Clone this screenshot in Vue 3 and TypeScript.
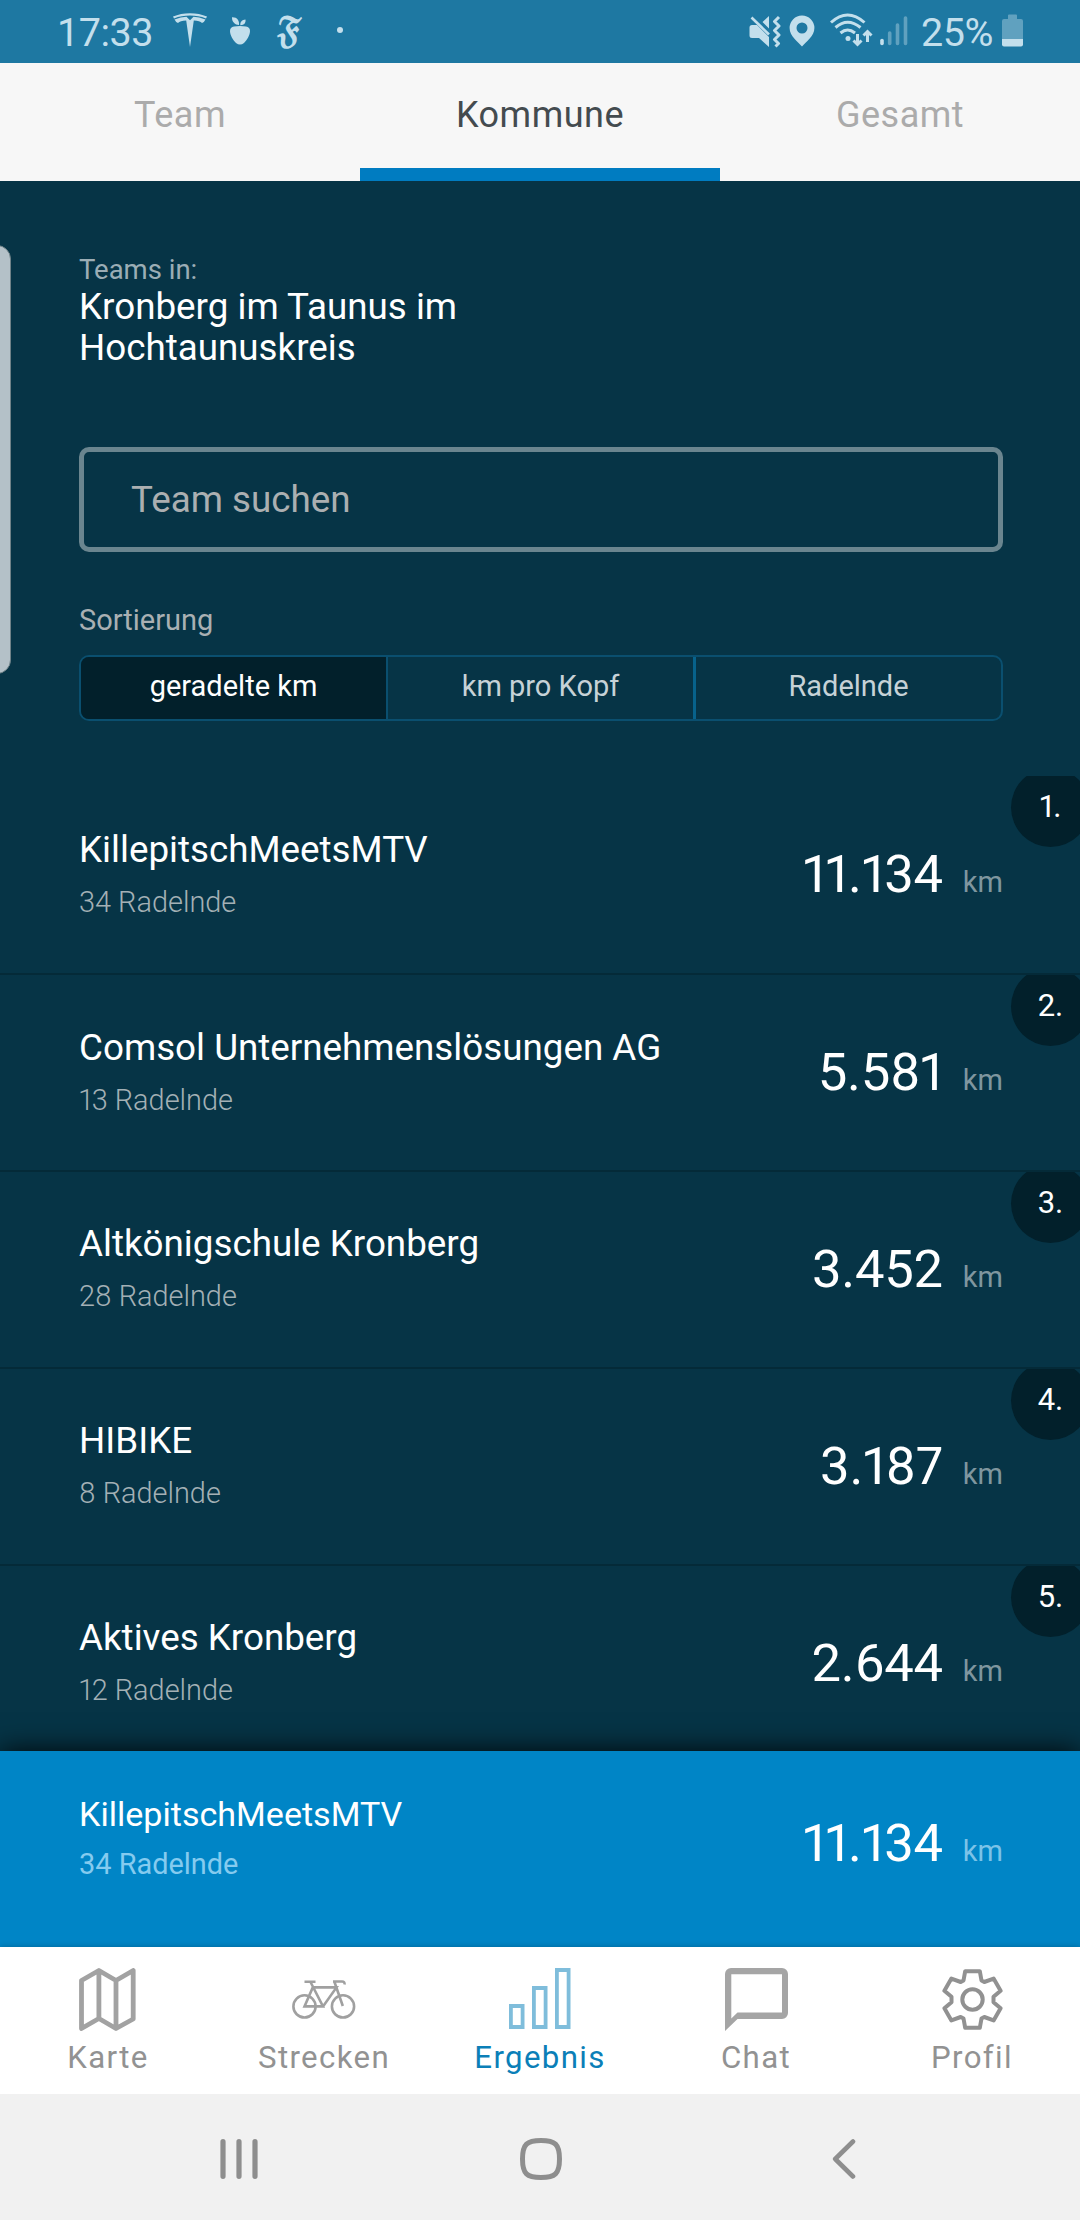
<script setup lang="ts">
import { ref } from 'vue'

interface Team {
  name: string
  riders: number
  km: string
}

const tabs: string[] = ['Team', 'Kommune', 'Gesamt']
const activeTab = ref<string>('Kommune')

const sortModes: string[] = ['geradelte km', 'km pro Kopf', 'Radelnde']
const sortMode = ref<string>('geradelte km')

const query = ref<string>('')

const teams: Team[] = [
  { name: 'KillepitschMeetsMTV', riders: 34, km: '11.134' },
  { name: 'Comsol Unternehmenslösungen AG', riders: 13, km: '5.581' },
  { name: 'Altkönigschule Kronberg', riders: 28, km: '3.452' },
  { name: 'HIBIKE', riders: 8, km: '3.187' },
  { name: 'Aktives Kronberg', riders: 12, km: '2.644' },
]
const ownTeam: Team = teams[0]
</script>

<template>
  <div class="screen">
    <header class="status">
      <span class="clock">17:33</span>
      <svg class="ic-tesla" width="34" height="34" viewBox="0 0 34 34" fill="currentColor">
        <path d="M0 3.6C10-1 24-1 34 3.6L33 5.400C23 1.600 11 1.600 1 5.400Z" />
        <path d="M1.500 6.600Q8 4 13.500 3.800L17 7.200L20.500 3.800Q26 4 32.500 6.600Q31.500 9 29 10Q27 7.600 20.800 7.400L17 34L13.200 7.400Q7 7.600 5 10Q2.500 9 1.500 6.600Z" />
      </svg>
      <svg class="ic-fruit" width="22" height="28" viewBox="0 0 22 28" fill="currentColor">
        <path d="M5 9.500Q1 10 1 14C1 18 4 23 7 26Q11 29 15 26C18 23 21 18 21 14Q21 10 17 9.500Q11 8.500 5 9.500Z" />
        <path d="M3 0.300C8 0 10.500 3.500 10 8C6 8 2.800 5 3 0.300Z" />
        <path d="M16.500 2.500C17 6 15 8.300 11.300 8.200C11 5 13 2.600 16.500 2.500Z" />
      </svg>
      <span class="ic-fraktur">𝔉</span>
      <span class="more-dot"></span>
      <span class="spacer"></span>
      <svg class="ic-mute" width="32" height="34" viewBox="0 0 32 34">
        <path fill="currentColor" d="M3 10H8L20 22V32L10 23H3Q0.500 23 0.500 20.500V12.500Q0.500 10 3 10ZM13.500 7L20 1V13.500Z" />
        <path d="M2.500 2.500L20 19.500" fill="none" stroke="currentColor" stroke-width="2.600" />
        <path d="M30 2L25.500 6.500L30 11L25.500 15.500L30 20L25.500 24.500L29.500 28.500L26.500 31.500" fill="none" stroke="currentColor" stroke-width="3" stroke-linejoin="round" />
      </svg>
      <svg class="ic-pin" width="26" height="32" viewBox="0 0 26 32" fill="currentColor">
        <path fill-rule="evenodd" d="M13 0.500A12.400 12.400 0 0 1 25.400 13C25.400 21 17 27 13 31.500C9 27 0.600 21 0.600 13A12.400 12.400 0 0 1 13 0.500ZM13 7.500A5.500 5.500 0 1 0 13 18.500A5.500 5.500 0 1 0 13 7.500Z" />
      </svg>
      <svg class="ic-wifi" width="43" height="34" viewBox="0 0 43 34" fill="none" stroke="currentColor" stroke-width="3">
        <path d="M1 9.500Q17.500-5.500 34.500 9.500" />
        <path d="M5.500 14.500Q17.500 4 30.500 14.500" />
        <path d="M10.500 20Q17.500 14 25 20" />
        <circle cx="18" cy="25.500" r="2.500" fill="currentColor" stroke="none" />
        <path d="M27.500 21V31M23.500 27.500L27.500 31.500L31.500 27.500M37.500 29V19M33.500 22.500L37.500 18.500L41.500 22.500" />
      </svg>
      <svg class="ic-signal" width="28" height="32" viewBox="0 0 28 32" stroke="currentColor" stroke-width="3.600" stroke-linecap="round">
        <path d="M2 25.500V28.500" />
        <path opacity="0.400" d="M9.700 18V28.500M17.500 10V28.500M25.500 3V28.500" />
      </svg>
      <span class="percent">25%</span>
      <svg class="ic-battery" width="21" height="34" viewBox="0 0 21 34" fill="currentColor">
        <path opacity="0.400" d="M6 1.500Q6 0.500 7 0.500H14Q15 0.500 15 1.500V5H19Q21 5 21 7V25H0V7Q0 5 2 5H6Z" />
        <path d="M0 25H21V30.500Q21 32.500 19 32.500H2Q0 32.500 0 30.500Z" />
      </svg>
    </header>

    <nav class="tabs">
      <button v-for="t in tabs" :key="t" class="tab" :class="{ active: t === activeTab }" @click="activeTab = t">{{ t }}</button>
    </nav>

    <main class="content">
      <div class="edge-handle"></div>
      <p class="scope-label">Teams in:</p>
      <h1 class="scope">Kronberg im Taunus im Hochtaunuskreis</h1>
      <input v-model="query" class="search" type="text" placeholder="Team suchen" />
      <p class="sort-label">Sortierung</p>
      <div class="segments">
        <button v-for="m in sortModes" :key="m" class="segment" :class="{ active: m === sortMode }" @click="sortMode = m">{{ m }}</button>
      </div>

      <ol class="ranking">
        <li v-for="(team, i) in teams" :key="team.name" class="row">
          <div class="team">
            <div class="name">{{ team.name }}</div>
            <div class="riders">{{ team.riders }} Radelnde</div>
          </div>
          <div class="distance"><span class="value">{{ team.km }}</span><span class="unit">km</span></div>
          <span class="rank">{{ i + 1 }}.</span>
        </li>
      </ol>
    </main>

    <section class="own">
      <div class="team">
        <div class="name">{{ ownTeam.name }}</div>
        <div class="riders">{{ ownTeam.riders }} Radelnde</div>
      </div>
      <div class="distance"><span class="value">{{ ownTeam.km }}</span><span class="unit">km</span></div>
    </section>

    <nav class="bottom-nav">
      <a class="item">
        <svg class="ic-map" width="57" height="63" viewBox="0 0 57 63" fill="none" stroke="#a2a2a2" stroke-width="4.800" stroke-linejoin="round">
          <path d="M2.500 12.500L19.900 2.500L37 12.500L54.200 2.500V51L37 60.500L19.900 50.500L2.500 60.500ZM19.900 2.500V50.500M37 12.500V60.500" />
        </svg>
        <span>Karte</span>
      </a>
      <a class="item">
        <svg width="64" height="63" viewBox="0 -12 64 63" fill="none" stroke="#a0a0a0" stroke-width="2.600">
          <circle cx="12.500" cy="26.400" r="11.100" />
          <circle cx="51" cy="26.400" r="11.100" />
          <path d="M12.500 1.800H23.500M18.500 2L31 26.400H12.500L20.800 7.400H44.500L31 26.400M42.300 1.500L50.800 26M41 1.500H50Q53 1.500 52.500 4.500" />
        </svg>
        <span>Strecken</span>
      </a>
      <a class="item active">
        <svg class="ic-bars" width="62" height="63" viewBox="0 0 62 63" fill="none" stroke="#7fbddb" stroke-width="3.800">
          <path d="M1.900 38H13.600V59H1.900ZM24.900 20H36.600V59H24.900ZM47.900 2H59.600V59H47.900Z" />
        </svg>
        <span>Ergebnis</span>
      </a>
      <a class="item">
        <svg width="63" height="63" viewBox="0 0 63 63" fill="#a5a5a5">
          <path fill-rule="evenodd" d="M6 0H57A6 6 0 0 1 63 6V45A6 6 0 0 1 57 51H12.500L0 63V6A6 6 0 0 1 6 0ZM6.300 6.200V50.500L12.500 44.500H57V6.200Z" />
        </svg>
        <span>Chat</span>
      </a>
      <a class="item">
        <svg width="61" height="63" viewBox="0 0 61 63" fill="none" stroke="#919191" stroke-width="4" stroke-linejoin="round">
          <path d="M23.200 3.200H37.800L39.500 12.500L42.300 14L51.600 10.600L58.600 22.800L51.500 28.800V34.200L58.600 40.200L51.600 52.400L42.300 49L39.500 50.500L37.800 59.800H23.200L21.500 50.500L18.700 49L9.400 52.400L2.400 40.200L9.500 34.200V28.800L2.400 22.800L9.400 10.600L18.700 14L21.500 12.500Z" />
          <circle cx="30.500" cy="31.500" r="10.200" />
        </svg>
        <span>Profil</span>
      </a>
    </nav>

    <footer class="system-nav">
      <svg width="38" height="42" viewBox="0 0 38 42" stroke="#8e8e8e" stroke-width="5.200" stroke-linecap="round">
        <path d="M3 3.700V38.300M19 3.700V38.300M35 3.700V38.300" />
      </svg>
      <svg class="home" width="42" height="42" viewBox="0 0 42 42" fill="none" stroke="#8e8e8e" stroke-width="5">
        <path d="M21 2.500C35 2.500 39.500 6 39.500 21S35 39.500 21 39.500S2.500 36 2.500 21S7 2.500 21 2.500Z" />
      </svg>
      <svg class="back" width="24" height="42" viewBox="0 0 24 42" fill="none" stroke="#8e8e8e" stroke-width="4.600" stroke-linecap="round" stroke-linejoin="round">
        <path d="M21 3.500L3.200 21L21 38.500" />
      </svg>
    </footer>
  </div>
</template>

<style>
body {
  margin: 0;
  background: #063446;
}
</style>

<style scoped>
.screen {
  width: 1080px;
  height: 2220px;
  display: flex;
  flex-direction: column;
  overflow: hidden;
  font-family: Roboto, "Liberation Sans", sans-serif;
  background: #063446;
  color: #fff;
}

button,
input {
  font-family: inherit;
  margin: 0;
}

svg {
  display: block;
  flex: none;
}

/* status bar */
.status {
  height: 63px;
  flex: none;
  display: flex;
  align-items: center;
  box-sizing: border-box;
  padding: 0 57px 0 57px;
  background: #1e78a2;
  color: #c3dfec;
  font-size: 39.500px;
}

.clock,
.percent {
  line-height: 63px;
  padding-top: 2px;
  letter-spacing: -0.500px;
}

.clock { width: 116px; }
.ic-tesla { margin-top: -3px; }
.ic-fruit { margin-left: 22px; margin-top: -2px; }
.ic-fraktur {
  width: 30px;
  margin-left: 24px;
  font-family: "DejaVu Math TeX Gyre", "DejaVu Sans", serif;
  font-size: 34px;
  font-weight: 700;
  line-height: 58px;
}
.more-dot {
  width: 6px;
  height: 6px;
  margin-left: 32px;
  margin-top: -3px;
  border-radius: 50%;
  background: currentColor;
}
.spacer { flex: 1; }
.ic-mute { margin-right: 8px; margin-top: 0; }
.ic-pin { margin-right: 15px; margin-top: -2px; }
.ic-wifi { margin-right: 7px; margin-top: -4px; }
.ic-signal { margin-right: 13px; margin-top: -1px; }
.percent { width: 81px; }
.ic-battery { margin-top: -2px; }

/* top tabs */
.tabs {
  height: 118px;
  flex: none;
  display: flex;
  background: #f7f7f7;
}

.tab {
  flex: 1;
  padding: 0 0 2px;
  border: 0;
  border-bottom: 13px solid transparent;
  background: none;
  font-size: 36px;
  letter-spacing: 0.500px;
  color: #ababab;
}

.tab.active {
  color: #444b4f;
  border-bottom-color: #007cc1;
}

/* content */
.content {
  position: relative;
  flex: 1;
  min-height: 0;
  overflow: hidden;
  padding-top: 72px;
  box-sizing: border-box;
}

.edge-handle {
  position: absolute;
  left: -20px;
  top: 64px;
  width: 31px;
  height: 429px;
  box-sizing: border-box;
  border: 1.500px solid #6f8288;
  border-radius: 14px;
  background: #b4c1c8;
}

.scope-label,
.sort-label {
  margin: 0 77px 0 79px;
  font-size: 27.500px;
  line-height: 33px;
  color: #9badb5;
}

.scope {
  margin: 0 0 0 79px;
  width: 480px;
  font-size: 36.770px;
  font-weight: 400;
  line-height: 41px;
}

.search {
  display: block;
  width: 924px;
  height: 105px;
  box-sizing: border-box;
  margin: 79px 0 0 79px;
  padding: 0 47px;
  border: 5px solid #6a858f;
  border-radius: 10px;
  background: transparent;
  outline: none;
  font-size: 36.770px;
  color: #fff;
}

.search::placeholder {
  color: #abafb1;
  opacity: 1;
}

.sort-label {
  margin-top: 51px;
  font-size: 29px;
  line-height: 34px;
  color: #a9b0b3;
}

.segments {
  display: flex;
  width: 924px;
  height: 66px;
  box-sizing: border-box;
  margin: 18px 0 0 79px;
  border: 2px solid #0a4f6f;
  border-radius: 10px;
  overflow: hidden;
}

.segment {
  flex: 1;
  padding: 0 0 4px;
  border: 0;
  background: none;
  font-size: 29px;
  color: #c6d2d7;
}

.segment + .segment { border-left: 2px solid #0a4f6f; }
.segment:last-child { border-left: 3px solid #07628b; }

.segment.active {
  background: #02202b;
  color: #fff;
}

/* ranking */
.ranking {
  margin: 55px 0 0;
  padding: 0;
  list-style: none;
}

.ranking,
.own {
  font-variant-numeric: proportional-nums;
}

.row {
  position: relative;
  display: flex;
  align-items: center;
  justify-content: space-between;
  height: 197px;
  box-sizing: border-box;
  padding: 0 77px 2px 79px;
  border-bottom: 2px solid #042a38;
  overflow: hidden;
}

.row:first-child { height: 199px; }
.row:nth-child(n + 3) .team { margin-bottom: 1px; }

.name {
  font-size: 36.770px;
  line-height: 41px;
}

.riders {
  margin-top: 15px;
  font-size: 28.900px;
  font-weight: 300;
  line-height: 34px;
  color: #a3b0b5;
}

.distance {
  display: flex;
  align-items: baseline;
}

.value {
  font-size: 52.600px;
  line-height: 62px;
  letter-spacing: -0.250px;
}

.unit {
  margin-left: 20px;
  font-size: 29px;
  color: #7f969f;
}

.rank {
  position: absolute;
  right: -10px;
  top: -8px;
  width: 79px;
  height: 79px;
  box-sizing: border-box;
  border-radius: 50%;
  background: #02202b;
  font-size: 31px;
  line-height: 78px;
  text-align: center;
}

/* own team */
.own {
  position: relative;
  z-index: 1;
  flex: none;
  height: 196px;
  box-sizing: border-box;
  display: flex;
  align-items: flex-start;
  justify-content: space-between;
  padding: 43px 77px 0 79px;
  background: #0085c6;
  box-shadow: 0 0 26px 0 rgba(0, 0, 0, 0.900);
}

.own .name {
  font-size: 34.100px;
  line-height: 40px;
}

.own .riders {
  margin-top: 13px;
  font-weight: 400;
  color: #85cbef;
}

.own .distance { margin-top: 18px; }
.own .unit { color: #7cc3e8; }

/* bottom navigation */
.bottom-nav {
  position: relative;
  z-index: 2;
  flex: none;
  height: 147px;
  display: flex;
  background: #fff;
  box-shadow: 0 0 6px rgba(0, 0, 0, 0.250);
}

.item {
  flex: 1;
  display: flex;
  flex-direction: column;
  align-items: center;
  padding-top: 21px;
  font-size: 31.200px;
  line-height: 36px;
  letter-spacing: 1.350px;
  color: #929292;
}

.item span { margin-top: 9px; }
.item.active { color: #0b7fb8; }
.ic-map { margin-right: 1px; }
.ic-bars { margin-right: 1px; }

/* system navigation */
.system-nav {
  position: relative;
  z-index: 3;
  flex: none;
  height: 126px;
  display: flex;
  align-items: center;
  box-sizing: border-box;
  padding: 4px 0 0 220px;
  background: #f1f1f1;
}

.system-nav .home { margin-left: 262px; }
.system-nav .back { margin-left: 270px; }
</style>
